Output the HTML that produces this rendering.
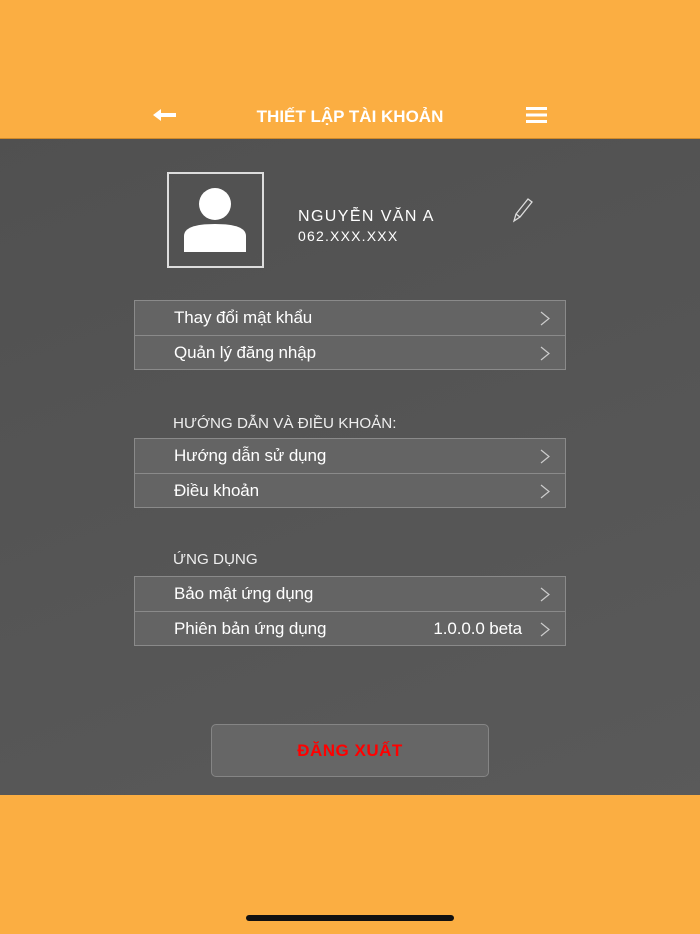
<!DOCTYPE html>
<html><head><meta charset="utf-8"><style>
*{margin:0;padding:0;box-sizing:border-box}
body{width:700px;height:934px;overflow:hidden;position:relative;font-family:"Liberation Sans",sans-serif;background:linear-gradient(160deg,#4f4f4f,#5b5b5b)}
.top{position:absolute;left:0;top:0;width:700px;height:139px;background:#fbae42;border-bottom:1px solid #d08a2a}
.title{position:absolute;top:107px;width:700px;text-align:center;color:#fff;font-weight:bold;font-size:17px;letter-spacing:0}
.bot{position:absolute;left:0;top:795px;width:700px;height:139px;background:#fbae42}
.home{position:absolute;left:246px;top:915px;width:208px;height:6px;border-radius:3px;background:#111}
.group{position:absolute;left:134px;width:432px;border:1px solid #8a8a8a;background:#646464}
.row{height:34px;position:relative;color:#fff;font-size:17px;line-height:34px;padding-left:39px;letter-spacing:-.1px}
.row+.row{border-top:1px solid #8a8a8a}
.row svg{position:absolute;right:15px;top:10px}
.row .v{position:absolute;right:43px;top:0;font-weight:normal}
.sec{position:absolute;left:173px;color:#eee;font-size:15.2px}
.btn{position:absolute;left:211px;top:724px;width:278px;height:53px;border:1px solid #858585;border-radius:5px;background:#666;color:#f00;font-weight:bold;font-size:17px;text-align:center;line-height:51px;letter-spacing:.5px}
</style></head><body>
<div class="top"></div>
<svg style="position:absolute;left:153px;top:109px" width="24" height="12"><path d="M0 6 L8 0 L8 4 L23 4 L23 8 L8 8 L8 12Z" fill="#fff"/></svg>
<div class="title">THIẾT LẬP TÀI KHOẢN</div>
<svg style="position:absolute;left:526px;top:107px" width="21" height="16"><rect y="0" width="21" height="3" fill="#fff"/><rect y="6.5" width="21" height="3" fill="#fff"/><rect y="13" width="21" height="3" fill="#fff"/></svg>
<div style="position:absolute;left:167px;top:172px;width:97px;height:96px;border:2px solid #ddd"></div>
<svg style="position:absolute;left:183px;top:187px" width="64" height="66"><circle cx="32" cy="17" r="16" fill="#fff"/><path d="M1 65 L1 49 Q1 37 32 37 Q63 37 63 49 L63 65Z" fill="#fff"/></svg>
<div style="position:absolute;left:298px;top:208px;color:#fff;font-size:16px;letter-spacing:1.4px">NGUYỄN VĂN A</div>
<div style="position:absolute;left:298px;top:228px;color:#fff;font-size:14px;letter-spacing:1.2px">062.XXX.XXX</div>
<svg style="position:absolute;left:512px;top:197px" width="22" height="26"><path d="M2 24 L4 17 L16 2 L20 5 L8 20Z M4 17 L8 20" fill="none" stroke="#ddd" stroke-width="1.3"/></svg>
<div class="group" style="top:300px">
<div class="row">Thay đổi mật khẩu<svg width="10" height="15"><path d="M1 1 L9 7.5 L1 14" fill="none" stroke="#ccc" stroke-width="1.2"/></svg></div>
<div class="row">Quản lý đăng nhập<svg width="10" height="15"><path d="M1 1 L9 7.5 L1 14" fill="none" stroke="#ccc" stroke-width="1.2"/></svg></div>
</div>
<div class="sec" style="top:415px">HƯỚNG DẪN VÀ ĐIỀU KHOẢN:</div>
<div class="group" style="top:438px">
<div class="row">Hướng dẫn sử dụng<svg width="10" height="15"><path d="M1 1 L9 7.5 L1 14" fill="none" stroke="#ccc" stroke-width="1.2"/></svg></div>
<div class="row">Điều khoản<svg width="10" height="15"><path d="M1 1 L9 7.5 L1 14" fill="none" stroke="#ccc" stroke-width="1.2"/></svg></div>
</div>
<div class="sec" style="top:551px">ỨNG DỤNG</div>
<div class="group" style="top:576px">
<div class="row">Bảo mật ứng dụng<svg width="10" height="15"><path d="M1 1 L9 7.5 L1 14" fill="none" stroke="#ccc" stroke-width="1.2"/></svg></div>
<div class="row">Phiên bản ứng dụng<span class="v">1.0.0.0 beta</span><svg width="10" height="15"><path d="M1 1 L9 7.5 L1 14" fill="none" stroke="#ccc" stroke-width="1.2"/></svg></div>
</div>
<div class="btn">ĐĂNG XUẤT</div>
<div class="bot"></div>
<div class="home"></div>
</body></html>
